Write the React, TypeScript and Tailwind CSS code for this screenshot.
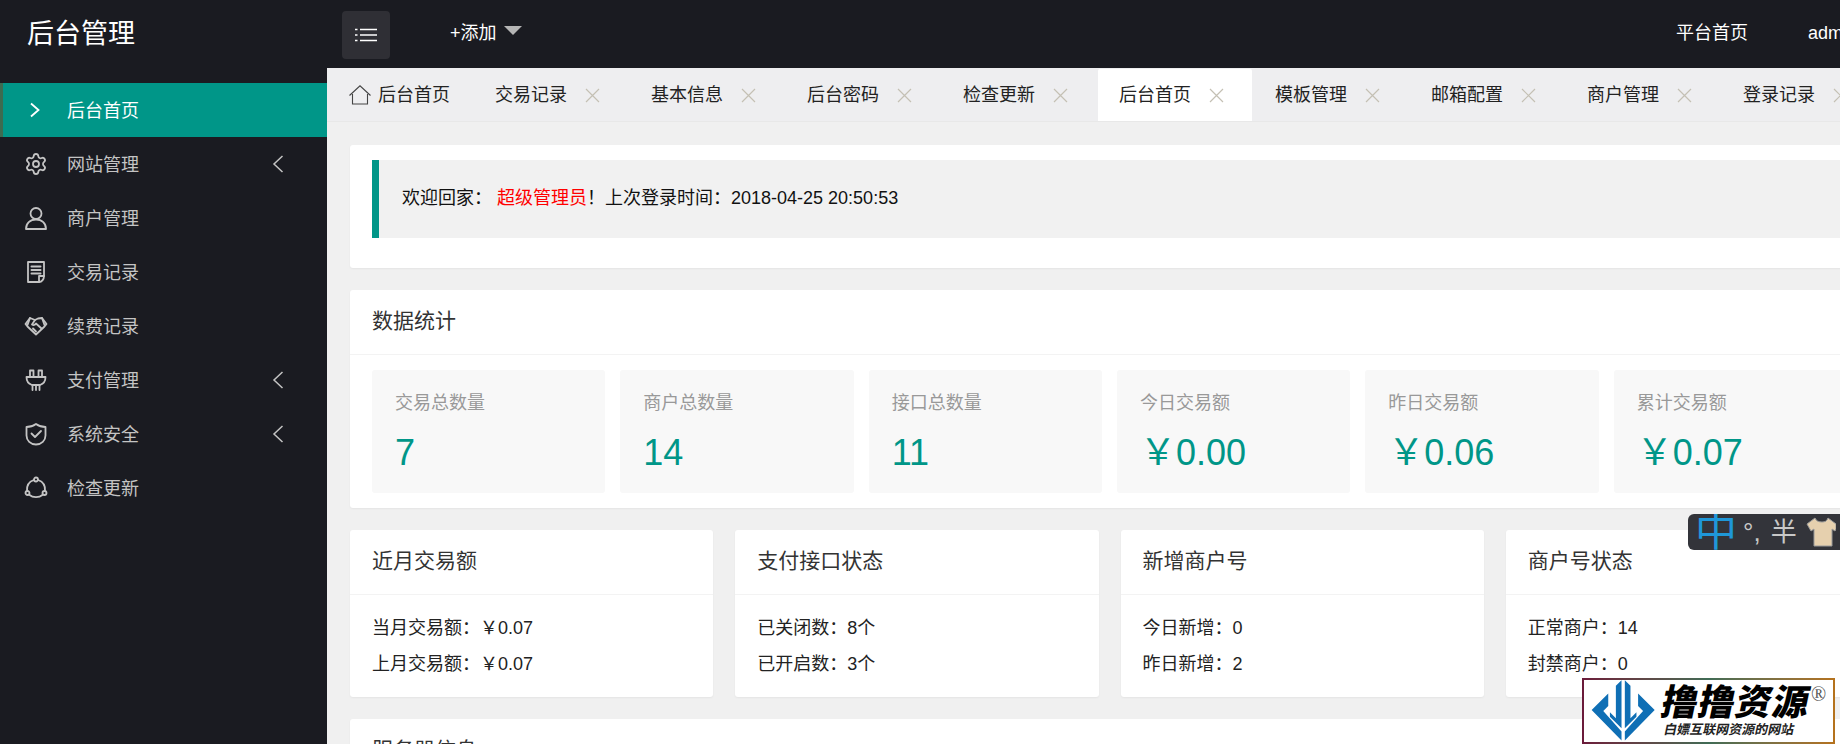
import type { ReactNode } from "react";
import { Settings } from "lucide-react";

// Admin dashboard. The page is wider than the 1840px window, so the right edge is clipped.

const iconProps = {
  width: 24,
  height: 24,
  viewBox: "0 0 24 24",
  fill: "none",
  stroke: "currentColor",
  strokeWidth: 1.8,
  strokeLinejoin: "round" as const,
  strokeLinecap: "round" as const,
};

function UserIcon() {
  return (
    <svg {...iconProps}>
      <circle cx="12" cy="7.500" r="5.500" />
      <path d="M2 23c0-5.500 4-9.500 10-9.500S22 17.500 22 23z" />
    </svg>
  );
}

function DocIcon() {
  return (
    <svg {...iconProps}>
      <path d="M20 16V2H4v20h11" />
      <path d="M7.500 6.500h9M7.500 10h9M7.500 13.500h9" strokeWidth="2" />
      <path d="M15 22v-6h5c0 3-2 6-5 6z" />
    </svg>
  );
}

function HandshakeIcon() {
  return (
    <svg {...iconProps}>
      <path d="M1.500 10 6 4l5 2 3-1.500L18 4l4.500 6-2 2.500-8.500 8-8.500-8z" />
      <path d="M11 6 8 10.500c1.500 1 3 .5 4-1l5.500 5" />
      <path d="M6 4 3.500 11M18 4l2.500 7" />
      <path d="M9 14.500l3 3" />
    </svg>
  );
}

function PlugIcon() {
  return (
    <svg {...iconProps}>
      <path d="M6 9V2.500h3.500V9M14.500 9V2.500H18V9" />
      <path d="M2.500 9h19c0 4-2.500 7-5.500 8H8c-3-1-5.500-4-5.500-8z" />
      <path d="M8.500 17v5M12 17v5M15.500 17v5" />
    </svg>
  );
}

function ShieldIcon() {
  return (
    <svg {...iconProps}>
      <path d="M2.500 5c4 0 7-1.200 9.500-3 2.500 1.800 5.500 3 9.500 3v8.500c0 5-4 9-9.500 9s-9.500-4-9.500-9z" />
      <path d="m7.500 11.500 3.500 3.500 6-6" />
    </svg>
  );
}

function UpdateIcon() {
  return (
    <svg {...iconProps}>
      <circle cx="12" cy="3.500" r="2" />
      <circle cx="3.500" cy="17" r="2" />
      <circle cx="20.500" cy="17" r="2" />
      <path d="M9.800 4C5.500 5.500 2.500 9.500 3 15M14.200 4c4.300 1.500 7.300 5.500 6.800 11M5.200 18.800c3.800 3.200 9.800 3.200 13.600 0" />
    </svg>
  );
}

function ChevronLeftThin() {
  return (
    <svg width="12" height="18" viewBox="0 0 12 18" fill="none" stroke="currentColor" strokeWidth="1.500">
      <path d="M10.500 1 2 9l8.500 8" />
    </svg>
  );
}

function CloseX() {
  return (
    <svg width="15" height="15" viewBox="0 0 15 15" fill="none" stroke="#c4c0b4" strokeWidth="1.200" className="shrink-0">
      <path d="m1 1 13 13M14 1 1 14" />
    </svg>
  );
}

function HomeIcon() {
  return (
    <svg width="22" height="20" viewBox="0 0 22 20" fill="none" stroke="#444" strokeWidth="1.100" className="shrink-0">
      <path d="M.500 10.500 11 .800l10.500 9.700M3.500 9v10h15V9" />
    </svg>
  );
}

function MenuIcon() {
  return (
    <svg width="22" height="14" viewBox="0 0 22 14" fill="none" stroke="#fff" strokeWidth="1.300">
      <path d="M0 1.500h2.500M5 1.500h17M0 7h2.500M5 7h17M0 12.500h2.500M5 12.500h17" />
    </svg>
  );
}

function ShirtIcon() {
  return (
    <svg width="30" height="30" viewBox="0 0 30 30">
      <path d="M9 1 1 7l4 7 3-2v17h18V12l3 2 1-2V7l-8-6c-1 3-3 4-6 4s-6-1-7-4z" fill="#e6d0ae" stroke="#9a9a9a" strokeWidth="1" />
    </svg>
  );
}

function LogoMark() {
  return (
    <svg width="68" height="62" viewBox="30 15 205 186" className="shrink-0" fill="#0f6fb5">
      <path d="M85 55 35 105l90 92v-27l-55-62 15-15z" />
      <path d="M125 15 108 32v98L90 112v13l35 35z" />
      <path d="M175 55l50 50-90 92v-27l55-62-15-15z" />
      <path d="M135 15l17 17v98l18-18v13l-35 35z" />
    </svg>
  );
}

type MenuItem = { label: string; icon: ReactNode; caret?: boolean };

const menuItems: MenuItem[] = [
  { label: "网站管理", icon: <Settings size={24} strokeWidth={1.8} />, caret: true },
  { label: "商户管理", icon: <UserIcon /> },
  { label: "交易记录", icon: <DocIcon /> },
  { label: "续费记录", icon: <HandshakeIcon /> },
  { label: "支付管理", icon: <PlugIcon />, caret: true },
  { label: "系统安全", icon: <ShieldIcon />, caret: true },
  { label: "检查更新", icon: <UpdateIcon /> },
];

const tabs = ["交易记录", "基本信息", "后台密码", "检查更新", "后台首页", "模板管理", "邮箱配置", "商户管理", "登录记录"];

const stats = [
  { label: "交易总数量", value: "7" },
  { label: "商户总数量", value: "14" },
  { label: "接口总数量", value: "11" },
  { label: "今日交易额", value: "￥0.00" },
  { label: "昨日交易额", value: "￥0.06" },
  { label: "累计交易额", value: "￥0.07" },
];

const summaries = [
  { title: "近月交易额", rows: ["当月交易额：￥0.07", "上月交易额：￥0.07"] },
  { title: "支付接口状态", rows: ["已关闭数：8个", "已开启数：3个"] },
  { title: "新增商户号", rows: ["今日新增：0", "昨日新增：2"] },
  { title: "商户号状态", rows: ["正常商户：14", "封禁商户：0"] },
];

function Sidebar() {
  return (
    <aside className="w-[327px] shrink-0 bg-[#1a1b21] pt-[15px] text-[18px] text-[#c4c4c4]">
      <div className="flex h-[54px] items-center border-l-[3px] border-[#3d6b50] bg-[#009688] text-white">
        <svg width="12" height="16" viewBox="0 0 12 16" fill="none" stroke="#fff" strokeWidth="1.800" className="ml-[26px] mr-[26px]">
          <path d="m2 1.500 7.500 6.500L2 14.500" />
        </svg>
        <span className="pt-[2px]">后台首页</span>
      </div>
      {menuItems.map((item) => (
        <div key={item.label} className="flex h-[54px] items-center pl-[24px]">
          <span className="flex w-[43px] shrink-0">{item.icon}</span>
          <span className="w-[205px] pt-[2px]">{item.label}</span>
          {item.caret ? <ChevronLeftThin /> : null}
        </div>
      ))}
    </aside>
  );
}

function TabBar() {
  return (
    <div className="flex h-[54px] items-end gap-[2px] border-b border-[#e8e8e8] bg-[#eeeef0] text-[18px] text-[#222]">
      <div className="flex h-[52px] w-[145px] items-center gap-[7px] pl-[22px]">
        <HomeIcon />
        <span>后台首页</span>
      </div>
      {tabs.map((tab, i) => (
        <div
          key={i}
          className={
            i === 4
              ? "flex h-[52px] w-[154px] items-center gap-[18px] rounded-t-[2px] bg-white pl-[21px]"
              : "flex h-[52px] w-[154px] items-center gap-[18px] pl-[21px]"
          }
        >
          <span className="shrink-0">{tab}</span>
          <CloseX />
        </div>
      ))}
    </div>
  );
}

function PanelHeader({ children }: { children: ReactNode }) {
  return (
    <div className="flex h-[65px] items-center border-b border-[#f3f3f3] pb-[2px] pl-[22px] text-[21px] text-[#333]">
      {children}
    </div>
  );
}

function Panel({ children, className }: { children: ReactNode; className?: string }) {
  return (
    <section className={`rounded-[3px] bg-white shadow-[0_1px_2px_0_rgba(0,0,0,0.05)] ${className ?? ""}`}>
      {children}
    </section>
  );
}

export default function App() {
  return (
    <div className="relative h-[744px] w-[1840px] overflow-hidden bg-[#f0f0f0] font-['Liberation_Sans','Noto_Sans_CJK_SC',sans-serif]">
      <div className="flex h-[744px] w-[1891px] flex-col">
        <header className="flex h-[68px] shrink-0 items-center bg-[#1a1b21] text-white">
          <div className="w-[342px] shrink-0 pl-[27px] text-[27px]">后台管理</div>
          <button className="mt-[2px] flex h-[48px] w-[48px] items-center justify-center rounded-[4px] bg-[#2f2f35]">
            <MenuIcon />
          </button>
          <div className="ml-[60px] flex items-center gap-[7px] pb-[2px] text-[18px]">
            <span>+添加</span>
            <span className="mb-[6px] h-0 w-0 border-x-[9px] border-t-[9px] border-x-transparent border-t-[#b5b5b5]" />
          </div>
          <nav className="ml-auto flex w-[215px] gap-[60px] pb-[2px] text-[18px]">
            <span>平台首页</span>
            <span>admin</span>
          </nav>
        </header>

        <div className="flex min-h-0 flex-1">
          <Sidebar />
          <main className="min-w-0 flex-1">
            <TabBar />
            <div className="flex flex-col gap-[22px] pl-[23px] pr-[22px] pt-[23px]">
              <Panel className="px-[22px] pb-[30px] pt-[15px]">
                <div className="flex h-[78px] items-center border-l-[7px] border-[#009688] bg-[#f1f1f1] pb-[2px] pl-[23px] text-[18px] text-[#111]">
                  <span>
                    欢迎回家： <span className="text-[#ff0000]">超级管理员</span>！上次登录时间：2018-04-25 20:50:53
                  </span>
                </div>
              </Panel>

              <Panel>
                <PanelHeader>数据统计</PanelHeader>
                <div className="grid grid-cols-6 gap-[15px] px-[22px] py-[15px]">
                  {stats.map((stat) => (
                    <div key={stat.label} className="h-[123px] rounded-[3px] bg-[#f8f8f8] pl-[23px] pt-[20px]">
                      <div className="text-[18px] leading-[26px] text-[#999]">{stat.label}</div>
                      <div className="mt-[15px] text-[36px] leading-[44px] text-[#009688]">{stat.value}</div>
                    </div>
                  ))}
                </div>
              </Panel>

              <div className="grid grid-cols-4 gap-[22px]">
                {summaries.map((item) => (
                  <Panel key={item.title} className="h-[167px]">
                    <PanelHeader>{item.title}</PanelHeader>
                    <div className="pl-[22px] pt-[15px] text-[18px] leading-[36px] text-[#222]">
                      {item.rows.map((row) => (
                        <div key={row}>{row}</div>
                      ))}
                    </div>
                  </Panel>
                ))}
              </div>

              <Panel>
                <PanelHeader>服务器信息</PanelHeader>
              </Panel>
            </div>
          </main>
        </div>
      </div>

      {/* input-method toolbar floating over the page */}
      <div className="absolute left-[1688px] top-[514px] flex h-[36px] w-[152px] items-center overflow-hidden rounded-l-[6px] bg-[#33343a] text-[#c8c8c8]">
        <span className="ml-[7px] w-[42px] text-[42px] leading-[36px] text-[#1f97d8]">中</span>
        <span className="ml-[6px] text-[26px] leading-[36px]">°,</span>
        <span className="ml-[10px] text-[26px] leading-[36px]">半</span>
        <span className="ml-[9px] flex">
          <ShirtIcon />
        </span>
      </div>

      {/* site watermark */}
      <div className="absolute left-[1582px] top-[678px] h-[66px] w-[253px] bg-linear-to-r from-[#6b1a3a] via-[#3f6b55] to-[#b5721c] p-[2px]">
        <div className="flex h-full items-center bg-white pl-[6px]">
          <LogoMark />
          <div className="ml-[4px] flex flex-col items-start">
            <div className="flex items-start">
              <span className="-skew-x-12 text-[36px] font-black leading-[38px] tracking-[1px] text-black">撸撸资源</span>
              <span className="ml-[1px] font-['Liberation_Serif'] text-[20px] leading-[20px] text-[#555]">®</span>
            </div>
            <span className="ml-[2px] -skew-x-12 text-[13px] font-bold leading-[16px] text-[#222]">白嫖互联网资源的网站</span>
          </div>
        </div>
      </div>
    </div>
  );
}
